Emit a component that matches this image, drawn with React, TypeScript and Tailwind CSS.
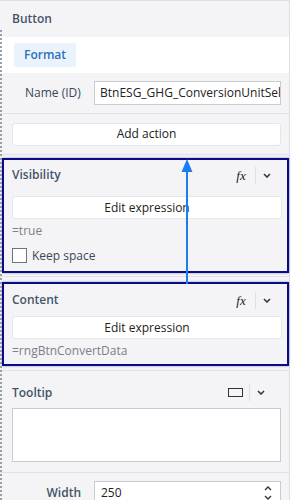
import React from "react";

const FxIcon = () => (
  <span className="text-[13px] italic text-[#222] leading-none" style={{ fontFamily: '"Liberation Serif", serif' }}>
    fx
  </span>
);

const Chevron = () => (
  <svg width="8" height="5" viewBox="0 0 8 5" className="block">
    <path d="M1 1 L4 4 L7 1" fill="none" stroke="#333a44" strokeWidth="1.6" />
  </svg>
);

const HeaderTools = ({ icon }: { icon: React.ReactNode }) => (
  <div className="flex items-center">
    <div className="w-[18px] flex justify-center">{icon}</div>
    <div className="w-px h-[17px] bg-[#dcdfe4] ml-[5px] mr-[5px]" />
    <div className="w-[12px] flex justify-center">
      <Chevron />
    </div>
  </div>
);

const EditButton = () => (
  <div className="h-[23px] bg-white border border-[#e3e6ea] rounded-[3px] flex items-center justify-center text-[12px] text-[#222]">
    Edit expression
  </div>
);

export default function App() {
  return (
    <div
      className="relative w-[293px] h-[500px] overflow-hidden bg-white text-[12px] text-[#3b4758]"
      style={{ fontFamily: '"Open Sans", "Noto Sans", sans-serif' }}
    >
      <div className="w-[290px] h-full border-r border-[#dcdfe4] flex flex-col">
        {/* Header */}
        <div className="shrink-0 h-[37px] border-t border-[#dcdfe4] bg-[#f4f4f6] flex items-center pl-3 font-semibold text-[12px] text-[#44546a]">
          Button
        </div>
        {/* Format tab row */}
        <div className="shrink-0 h-[36px] bg-white flex items-center pl-[14px]">
          <div className="h-[24px] px-[10px] bg-[#eaf3fc] rounded-[2px] flex items-center text-[12px] font-semibold text-[#2f70b8]">
            Format
          </div>
        </div>
        {/* Name row */}
        <div className="shrink-0 h-[41px] bg-[#f4f4f6] border-b border-[#dfe2e6] flex items-center pl-[25px] pr-2">
          <div className="w-[69px] text-[12px] text-[#3b4758]">Name (ID)</div>
          <div className="flex-1 h-[24px] bg-white border border-[#c8ccd2] flex items-center pl-[5px] overflow-hidden whitespace-nowrap text-[12px] text-[#222]">
            BtnESG_GHG_ConversionUnitSelect
          </div>
        </div>
        {/* Add action */}
        <div className="shrink-0 h-[41px] bg-[#f4f4f6] border-b border-[#dfe2e6] flex items-center pl-3 pr-2">
          <div className="flex-1 h-[23px] bg-white border border-[#e3e6ea] rounded-[3px] flex items-center justify-center text-[12px] text-[#222]">
            Add action
          </div>
        </div>
        {/* Visibility */}
        <div className="shrink-0 bg-[#f4f4f6] border-b border-[#dfe2e6] pt-[3px] pb-[3px] pl-[2px]">
          <div className="border-2 border-[#0a0a8a] shadow-[0_0_2px_rgba(0,0,80,0.4)] pl-[8px] pr-[5px] pb-[8px]">
            <div className="h-[30px] flex items-center justify-between pr-[9px]">
              <span className="text-[12px] font-semibold text-[#44546a]">Visibility</span>
              <HeaderTools icon={<FxIcon />} />
            </div>
            <div className="mt-[6px]">
              <EditButton />
            </div>
            <div className="mt-[4px] h-[16px] leading-[16px] text-[12px] text-[#7a7f88]">=true</div>
            <div className="mt-[9px] h-[15px] flex items-center gap-[5px]">
              <div className="w-[15px] h-[15px] bg-white border border-[#6f747c]" />
              <span className="text-[12px] leading-[15px] text-[#3b4758]">Keep space</span>
            </div>
          </div>
        </div>
        {/* Content */}
        <div className="shrink-0 bg-[#f4f4f6] border-b border-[#dfe2e6] pt-[5px] pb-[4px] pl-[2px]">
          <div className="border-2 border-[#0a0a8a] shadow-[0_0_2px_rgba(0,0,80,0.4)] pl-[8px] pr-[5px] pb-[5px]">
            <div className="h-[31px] pt-[1px] flex items-center justify-between pr-[9px]">
              <span className="text-[12px] font-semibold text-[#44546a]">Content</span>
              <HeaderTools icon={<FxIcon />} />
            </div>
            <div className="mt-[1px]">
              <EditButton />
            </div>
            <div className="mt-[4px] h-[16px] leading-[16px] text-[12px] text-[#7a7f88]">=rngBtnConvertData</div>
          </div>
        </div>
        {/* Tooltip */}
        <div className="shrink-0 bg-[#f4f4f6] border-b border-[#dfe2e6] pl-3 pr-2 pb-[10px]">
          <div className="pt-[14px] h-[37px] flex items-start justify-between pr-[14px]">
            <span className="text-[12px] leading-[16px] font-semibold text-[#44546a]">Tooltip</span>
            <div className="mt-[-1px]">
              <HeaderTools
                icon={<div className="w-[15px] h-[9px] border border-[#333]" />}
              />
            </div>
          </div>
          <div className="h-[54px] bg-white border border-[#c8ccd2]" />
        </div>
        {/* Width */}
        <div className="flex-1 bg-[#f4f4f6] flex items-start pt-[8px] pr-2">
          <div className="w-[94px] pr-[13px] text-right text-[12px] leading-[24px] font-semibold text-[#44546a]">Width</div>
          <div className="flex-1 h-[24px] bg-white border border-[#c8ccd2] flex items-center justify-between pl-[6px] pr-[8px] text-[12px] text-[#222]">
            <span>250</span>
            <div className="flex flex-col items-center gap-[4px]">
              <svg width="8" height="5" viewBox="0 0 8 5"><path d="M1 4 L4 1 L7 4" fill="none" stroke="#333" strokeWidth="1.4" /></svg>
              <svg width="8" height="5" viewBox="0 0 8 5"><path d="M1 1 L4 4 L7 1" fill="none" stroke="#333" strokeWidth="1.4" /></svg>
            </div>
          </div>
        </div>
      </div>
      {/* left dotted edge */}
      <div className="absolute left-0 top-[30px] bottom-0 w-[2px] border-l-2 border-dotted border-[#9aa0a8]" />
      {/* annotation arrow */}
      <svg className="absolute left-0 top-0 pointer-events-none" width="293" height="500">
        <line x1="187" y1="170" x2="187" y2="284" stroke="#1c7df0" strokeWidth="2" />
        <polygon points="187,159 181.5,172 192.5,172" fill="#1c7df0" />
      </svg>
    </div>
  );
}
